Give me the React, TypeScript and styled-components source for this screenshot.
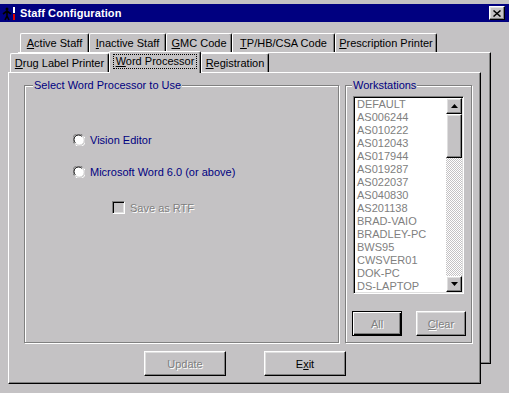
import React from 'react';
import styled, { createGlobalStyle, css } from 'styled-components';

const GlobalStyle = createGlobalStyle`
  * { box-sizing: border-box; }
  html, body {
    margin: 0;
    padding: 0;
    background: #c4c2c4;
  }
  body {
    font-family: "Liberation Sans", Arial, sans-serif;
    font-size: 11px;
    color: #000;
  }
`;

const workstations = [
  'DEFAULT',
  'AS006244',
  'AS010222',
  'AS012043',
  'AS017944',
  'AS019287',
  'AS022037',
  'AS040830',
  'AS201138',
  'BRAD-VAIO',
  'BRADLEY-PC',
  'BWS95',
  'CWSVER01',
  'DOK-PC',
  'DS-LAPTOP',
];

const frontTabs = [
  { key: 'D', rest: 'rug Label Printer', width: 99 },
  { key: 'W', rest: 'ord Processor', width: 92, active: true },
  { key: 'R', rest: 'egistration', width: 68 },
];

const backTabs = [
  { key: 'A', rest: 'ctive Staff', width: 69 },
  { key: 'I', rest: 'nactive Staff', width: 77 },
  { key: 'G', rest: 'MC Code', width: 66 },
  { key: 'T', rest: 'P/HB/CSA Code', width: 103 },
  { key: 'P', rest: 'rescription Printer', width: 102 },
];

function TitleIcon() {
  return (
    <svg width="16" height="16" viewBox="0 0 16 16">
      <circle cx="5" cy="4" r="1.5" fill="#000" />
      <path d="M1 9 L5 6 L9 9 M5 6 L5 11 M3 15 L5 11 L7 15" stroke="#000" strokeWidth="1.6" fill="none" />
      <rect x="11" y="2" width="2" height="6" fill="#fff" />
      <rect x="11" y="9" width="2" height="6" fill="#e00000" />
    </svg>
  );
}

function CloseGlyph() {
  return (
    <svg width="8" height="7" viewBox="0 0 8 7">
      <path d="M0.5 0.5 L7.5 6.5 M7.5 0.5 L0.5 6.5" stroke="#000" strokeWidth="1.5" />
    </svg>
  );
}

function Arrow({ down }: { down?: boolean }) {
  return (
    <svg width="7" height="4" viewBox="0 0 7 4">
      <path d={down ? 'M0 0 H7 L3.5 4 Z' : 'M0 4 H7 L3.5 0 Z'} fill="#000" />
    </svg>
  );
}

function RadioMark() {
  return (
    <svg width="12" height="12" viewBox="0 0 12 12">
      <circle cx="6" cy="6" r="5" fill="#fff" />
      <path d="M1.2 9.5 A5.5 5.5 0 0 1 9.5 1.2" stroke="#808080" strokeWidth="1" fill="none" />
      <path d="M2.3 8.8 A4.5 4.5 0 0 1 8.8 2.3" stroke="#000" strokeWidth="1" fill="none" />
      <path d="M10.8 2.5 A5.5 5.5 0 0 1 2.5 10.8" stroke="#fff" strokeWidth="1" fill="none" />
      <path d="M9.7 3.2 A4.5 4.5 0 0 1 3.2 9.7" stroke="#dfdfdf" strokeWidth="1" fill="none" />
    </svg>
  );
}

export default function App() {
  return (
    <>
      <GlobalStyle />
      <Window>
        <TitleBar>
          <TitleIcon />
          <TitleText>Staff Configuration</TitleText>
          <CloseButton>
            <CloseGlyph />
          </CloseButton>
        </TitleBar>

        <Body>
          <TabRow $offset={20}>
            {backTabs.map((t) => (
              <Tab key={t.key} style={{ width: t.width }}>
                <u>{t.key}</u>
                {t.rest}
              </Tab>
            ))}
          </TabRow>

          <BackPanel>
            <TabRow $offset={-9}>
              {frontTabs.map((t) => (
                <Tab key={t.key} $active={t.active} style={{ width: t.width }}>
                  {t.active ? (
                    <Focus>
                      <u>{t.key}</u>
                      {t.rest}
                    </Focus>
                  ) : (
                    <>
                      <u>{t.key}</u>
                      {t.rest}
                    </>
                  )}
                </Tab>
              ))}
            </TabRow>

            <FrontPanel>
              <Groups>
                <GroupBox $width={315}>
                  <Legend $left={8}>Select Word Processor to Use</Legend>
                  <OptionList>
                    <RadioRow>
                      <RadioMark />
                      <OptionLabel>Vision Editor</OptionLabel>
                    </RadioRow>
                    <RadioRow $gap={20}>
                      <RadioMark />
                      <OptionLabel>Microsoft Word 6.0 (or above)</OptionLabel>
                    </RadioRow>
                    <CheckRow>
                      <CheckBox />
                      <DisabledText>Save as RTF</DisabledText>
                    </CheckRow>
                  </OptionList>
                </GroupBox>

                <GroupBox $width={127}>
                  <Legend $left={6}>Workstations</Legend>
                  <ListBox>
                    <ListItems>
                      {workstations.map((w) => (
                        <ListItem key={w}>{w}</ListItem>
                      ))}
                    </ListItems>
                    <ScrollBar>
                      <ScrollButton>
                        <Arrow />
                      </ScrollButton>
                      <Thumb />
                      <Track />
                      <ScrollButton>
                        <Arrow down />
                      </ScrollButton>
                    </ScrollBar>
                  </ListBox>
                  <SmallButtons>
                    <PushButton $width={50} $default disabled>
                      <DisabledText>All</DisabledText>
                    </PushButton>
                    <PushButton $width={50} disabled>
                      <DisabledText>
                        <u>C</u>lear
                      </DisabledText>
                    </PushButton>
                  </SmallButtons>
                </GroupBox>
              </Groups>

              <DialogButtons>
                <PushButton $width={82} disabled>
                  <DisabledText>Update</DisabledText>
                </PushButton>
                <PushButton $width={82}>
                  E<u>x</u>it
                </PushButton>
              </DialogButtons>
            </FrontPanel>
          </BackPanel>
        </Body>
      </Window>
    </>
  );
}

const raised = css`
  border: 1px solid;
  border-color: #fff #000 #000 #fff;
  box-shadow: inset -1px -1px 0 #808080, inset 1px 1px 0 #dfdfdf;
`;

const Window = styled.div`
  width: 509px;
  height: 393px;
  overflow: hidden;
  background: #c4c2c4;
  padding-top: 4px;
  display: flex;
  flex-direction: column;
`;

const TitleBar = styled.div`
  height: 18px;
  background: #000080;
  display: flex;
  align-items: center;
  gap: 2px;
  padding: 0 4px 0 2px;
`;

const TitleText = styled.span`
  color: #fff;
  font-weight: bold;
  font-size: 11px;
  letter-spacing: 0.1px;
`;

const CloseButton = styled.div`
  ${raised};
  margin-left: auto;
  width: 16px;
  height: 14px;
  background: #c4c2c4;
  display: flex;
  align-items: center;
  justify-content: center;
`;

const Body = styled.div`
  padding-top: 11px;
`;

const TabRow = styled.div<{ $offset: number }>`
  display: flex;
  align-items: flex-end;
  height: 19px;
  margin-left: ${(p) => p.$offset}px;
`;

const Tab = styled.div<{ $active?: boolean }>`
  height: ${(p) => (p.$active ? 22 : 19)}px;
  margin-bottom: ${(p) => (p.$active ? -1 : 0)}px;
  position: relative;
  z-index: ${(p) => (p.$active ? 2 : 0)};
  background: #c4c2c4;
  border-left: 1px solid #fff;
  border-top: 1px solid #fff;
  border-right: 1px solid #000;
  border-top-left-radius: 2px;
  border-top-right-radius: 2px;
  box-shadow: inset -1px 0 0 #808080;
  display: flex;
  align-items: center;
  justify-content: center;
  padding-bottom: ${(p) => (p.$active ? 2 : 0)}px;
  white-space: nowrap;
`;

const Focus = styled.span`
  border: 1px dotted #000;
  padding: 1px 2px;
  line-height: 11px;
`;

const BackPanel = styled.div`
  margin-left: 18px;
  width: 473px;
  height: 312px;
  border: 1px solid;
  border-color: #fff #000 #000 #fff;
  box-shadow: inset -1px -1px 0 #808080;
`;

const FrontPanel = styled.div`
  position: relative;
  z-index: 1;
  margin-left: -11px;
  width: 473px;
  height: 312px;
  background: #c4c2c4;
  border: 1px solid;
  border-color: #fff #000 #000 #fff;
  box-shadow: inset -1px -1px 0 #808080;
  padding: 12px 0 0 15px;
`;

const Groups = styled.div`
  display: flex;
  gap: 6px;
`;

const GroupBox = styled.div<{ $width: number }>`
  position: relative;
  width: ${(p) => p.$width}px;
  height: 258px;
  border: 1px solid #808080;
  box-shadow: inset 1px 1px 0 #fff, 1px 1px 0 #fff;
`;

const Legend = styled.span<{ $left: number }>`
  position: absolute;
  top: -7px;
  left: ${(p) => p.$left}px;
  padding: 0 1px;
  background: #c4c2c4;
  color: #000080;
  line-height: 13px;
  white-space: nowrap;
`;

const OptionList = styled.div`
  display: flex;
  flex-direction: column;
  padding: 48px 0 0 48px;
`;

const RadioRow = styled.div<{ $gap?: number }>`
  display: flex;
  align-items: center;
  gap: 5px;
  height: 12px;
  margin-top: ${(p) => p.$gap ?? 0}px;
  svg {
    flex: none;
  }
`;

const OptionLabel = styled.span`
  color: #000080;
  white-space: nowrap;
`;

const CheckRow = styled.div`
  display: flex;
  align-items: center;
  gap: 5px;
  height: 13px;
  margin: 23px 0 0 39px;
`;

const CheckBox = styled.div`
  width: 13px;
  height: 13px;
  border: 1px solid;
  border-color: #808080 #fff #fff #808080;
  box-shadow: inset 1px 1px 0 #000, inset -1px -1px 0 #dfdfdf;
  background: #c4c2c4;
`;

const DisabledText = styled.span`
  color: #808080;
  text-shadow: 1px 1px 0 #fff;
  white-space: nowrap;
`;

const ListBox = styled.div`
  display: flex;
  width: 111px;
  height: 198px;
  margin: 10px 0 0 7px;
  background: #fff;
  border: 1px solid;
  border-color: #808080 #fff #fff #808080;
  box-shadow: inset 1px 1px 0 #000, inset -1px -1px 0 #dfdfdf;
  padding: 1px;
`;

const ListItems = styled.div`
  flex: 1;
  overflow: hidden;
  padding-left: 2px;
`;

const ListItem = styled.div`
  height: 13px;
  line-height: 13px;
  color: #808080;
  white-space: nowrap;
`;

const ScrollBar = styled.div`
  width: 16px;
  display: flex;
  flex-direction: column;
`;

const ScrollButton = styled.div`
  ${raised};
  flex: none;
  height: 16px;
  background: #c4c2c4;
  display: flex;
  align-items: center;
  justify-content: center;
`;

const Thumb = styled.div`
  ${raised};
  flex: none;
  height: 44px;
  background: #c4c2c4;
`;

const Track = styled.div`
  flex: 1;
  background: repeating-conic-gradient(#fff 0 25%, #c4c2c4 0 50%) 0 0 / 2px 2px;
`;

const SmallButtons = styled.div`
  display: flex;
  gap: 14px;
  margin: 17px 0 0 6px;
`;

const PushButton = styled.button<{ $width: number; $default?: boolean }>`
  width: ${(p) => p.$width}px;
  height: 25px;
  padding: 0;
  font: inherit;
  color: #000;
  background: #c4c2c4;
  cursor: default;
  ${raised};
  ${(p) =>
    p.$default &&
    css`
      border-color: #000;
      box-shadow: inset 1px 1px 0 #fff, inset -1px -1px 0 #000, inset -2px -2px 0 #808080;
    `}
`;

const DialogButtons = styled.div`
  display: flex;
  gap: 38px;
  margin: 8px 0 0 120px;
`;
